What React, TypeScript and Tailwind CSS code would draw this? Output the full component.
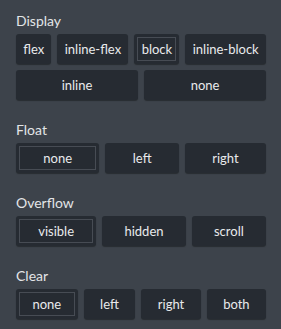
import React from "react";

type Opt = { label: string; selected?: boolean; grow?: "auto" | "equal" };

function Btn({ label, selected, grow = "auto" }: Opt) {
  return (
    <button
      className={
        (grow === "equal" ? "flex-1 basis-0 " : "flex-auto ") +
        "h-[30px] px-1.5 rounded-[3px] bg-[#262b32] text-[13px] text-[#e9eaec] leading-none shadow-[0_1px_1px_rgba(0,0,0,0.35)] " +
        (selected ? "outline outline-1 outline-[#474c54] outline-offset-[-4px]" : "")
      }
    >
      {label}
    </button>
  );
}

function Section({ title, rows }: { title: string; rows: Opt[][] }) {
  return (
    <div className="flex flex-col">
      <div className="text-[14px] leading-[20px] text-[#e3e5e7] mb-[3px]">{title}</div>
      <div className="flex flex-col gap-[6px]">
        {rows.map((r, i) => (
          <div key={i} className="flex gap-[6px]">
            {r.map((o) => (
              <Btn key={o.label} {...o} />
            ))}
          </div>
        ))}
      </div>
    </div>
  );
}

export default function App() {
  return (
    <div
      className="w-[281px] h-[329px] bg-[#3d434b] pl-4 pr-[15px] pt-[11px] flex flex-col gap-[20px]"
      style={{ fontFamily: "Lato, 'Open Sans', sans-serif" }}
    >
      <Section
        title="Display"
        rows={[
          [
            { label: "flex" },
            { label: "inline-flex" },
            { label: "block", selected: true },
            { label: "inline-block" },
          ],
          [
            { label: "inline", grow: "equal" },
            { label: "none", grow: "equal" },
          ],
        ]}
      />
      <Section
        title="Float"
        rows={[[{ label: "none", selected: true }, { label: "left" }, { label: "right" }]]}
      />
      <Section
        title="Overflow"
        rows={[[{ label: "visible", selected: true }, { label: "hidden" }, { label: "scroll" }]]}
      />
      <Section
        title="Clear"
        rows={[
          [
            { label: "none", selected: true },
            { label: "left" },
            { label: "right" },
            { label: "both" },
          ],
        ]}
      />
    </div>
  );
}
